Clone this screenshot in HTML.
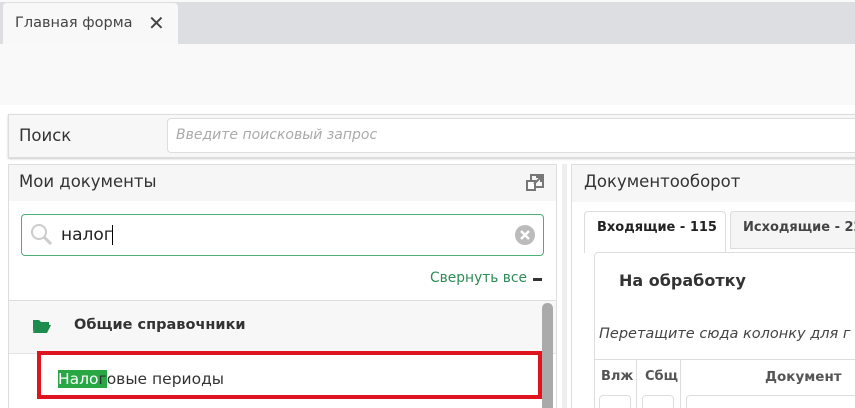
<!DOCTYPE html><html><head><meta charset="utf-8"><style>
*{box-sizing:border-box;margin:0;padding:0}
html,body{width:855px;height:408px;overflow:hidden}
body{background:#f9f9f9;font-family:"DejaVu Sans","Liberation Sans",sans-serif;position:relative;color:#333}
.a{position:absolute;white-space:nowrap}
</style></head><body>
<div class="a" style="left:0;top:2px;width:855px;height:42px;background:#dcdee2"></div>
<div class="a" style="left:3px;top:3px;width:175px;height:42px;background:#f8f8f8;border-radius:4px 4px 0 0"></div>
<div class="a" style="left:15px;top:15px;font-size:14.5px;color:#444">Главная форма</div>
<div class="a" style="left:148px;top:11px;font-size:20px;font-weight:bold;color:#444">✕</div>
<div class="a" style="left:0;top:105px;width:855px;height:303px;background:#fff"></div>
<div class="a" style="left:8px;top:114px;width:860px;height:44px;background:#f7f7f7;border:1px solid #ddd;box-shadow:0 1px 2px #ccc"></div>
<div class="a" style="left:19px;top:126px;font-size:16.5px;color:#333">Поиск</div>
<div class="a" style="left:167px;top:118px;width:700px;height:35px;background:#fff;border:1px solid #ddd;border-radius:4px"></div>
<div class="a" style="left:176px;top:127px;font-size:14px;font-style:italic;color:#aaa">Введите поисковый запрос</div>
<div class="a" style="left:8px;top:164px;width:549px;height:250px;background:#fff;border:1px solid #ddd"></div>
<div class="a" style="left:9px;top:165px;width:547px;height:36px;background:#f6f6f6"></div>
<div class="a" style="left:19px;top:172px;font-size:16.5px;color:#333">Мои документы</div>
<svg class="a" style="left:525px;top:173px" width="20" height="20" viewBox="0 0 20 20"><rect x="6" y="2" width="12" height="12" fill="none" stroke="#777" stroke-width="2"/><rect x="2" y="8" width="8" height="9" fill="#fff" stroke="#777" stroke-width="2"/><path d="M9 11 L16 4 M11 4h5v5" stroke="#777" stroke-width="2" fill="none"/></svg>
<div class="a" style="left:21px;top:214px;width:523px;height:42px;border:1px solid #4caf78;border-radius:4px;background:#fff"></div>
<svg class="a" style="left:30px;top:223px" width="24" height="24" viewBox="0 0 24 24"><circle cx="9" cy="9" r="7" fill="none" stroke="#ccc" stroke-width="2"/><path d="M14 14 L21 21" stroke="#ccc" stroke-width="3"/></svg>
<div class="a" style="left:61px;top:225px;font-size:17px;color:#222">налог<span style="border-left:1px solid #000;margin-left:-1px">&nbsp;</span></div>
<svg class="a" style="left:514px;top:224px" width="22" height="22"><circle cx="11" cy="11" r="10" fill="#bbb"/><path d="M7 7L15 15M15 7L7 15" stroke="#fff" stroke-width="2.5"/></svg>
<div class="a" style="right:328px;top:270px;font-size:13.8px;color:#2e8b57">Свернуть все</div>
<div class="a" style="left:533px;top:278px;width:9px;height:3px;background:#333"></div>
<div class="a" style="left:9px;top:300px;width:547px;height:54px;background:#f7f7f7;border-top:1px solid #ddd;border-bottom:1px solid #e4e4e4"></div>
<svg class="a" style="left:32px;top:318px" width="20" height="16"><path d="M1 2h6l2 2h8v3H6L1 14z" fill="#1e8c4c"/><path d="M5 7h14l-4 8H1z" fill="#1e8c4c"/></svg>
<div class="a" style="left:74px;top:317px;font-size:14.5px;font-weight:bold;color:#333">Общие справочники</div>
<div class="a" style="left:37px;top:351px;width:505px;height:48px;border:4px solid #e0141e"></div>
<div class="a" style="left:58px;top:370px;font-size:15.5px;color:#333"><span style="background:#28a745;color:#fff">Нало</span><span style="background:#28a745;color:#333">г</span>овые периоды</div>
<div class="a" style="left:542px;top:303px;width:11px;height:110px;background:#aaa;border-radius:5px"></div>
<div class="a" style="left:562px;top:164px;width:5px;height:250px;background:#eee"></div>
<div class="a" style="left:571px;top:164px;width:300px;height:250px;background:#fff;border:1px solid #ddd"></div>
<div class="a" style="left:572px;top:165px;width:290px;height:37px;background:#f6f6f6"></div>
<div class="a" style="left:584px;top:172px;font-size:16.5px;color:#333">Документооборот</div>
<div class="a" style="left:584px;top:211px;width:142px;height:42px;background:#fff;border:1px solid #ddd;border-bottom:none;border-radius:4px 4px 0 0"></div>
<div class="a" style="left:597px;top:220px;font-size:13px;font-weight:bold;color:#222">Входящие - 115</div>
<div class="a" style="left:730px;top:211px;width:140px;height:38px;background:#f5f5f5;border:1px solid #ddd;border-radius:4px 4px 0 0"></div>
<div class="a" style="left:743px;top:220px;font-size:13px;font-weight:bold;color:#444">Исходящие - 22</div>
<div class="a" style="left:594px;top:252px;width:280px;height:170px;border:1px solid #ddd;border-radius:4px"></div>
<div class="a" style="left:619px;top:271px;font-size:16px;font-weight:bold;color:#333">На обработку</div>
<div class="a" style="left:599px;top:326px;font-size:14.5px;font-style:italic;color:#444">Перетащите сюда колонку для г</div>
<div class="a" style="left:595px;top:359px;width:270px;height:1px;background:#ddd"></div>
<div class="a" style="left:636px;top:360px;width:1px;height:50px;background:#ddd"></div>
<div class="a" style="left:680px;top:360px;width:1px;height:50px;background:#ddd"></div>
<div class="a" style="left:601px;top:369px;font-size:13px;font-weight:bold;color:#555">Влж</div>
<div class="a" style="left:645px;top:369px;width:34px;overflow:hidden;font-size:13px;font-weight:bold;color:#555">Сбщ</div>
<div class="a" style="left:765px;top:369px;font-size:13.5px;font-weight:bold;color:#555">Документ</div>
<div class="a" style="left:599px;top:395px;width:32px;height:20px;border:1px solid #ddd;border-radius:4px"></div>
<div class="a" style="left:642px;top:395px;width:32px;height:20px;border:1px solid #ddd;border-radius:4px"></div>
<div class="a" style="left:686px;top:395px;width:180px;height:20px;border:1px solid #ddd;border-radius:4px"></div>
</body></html>
